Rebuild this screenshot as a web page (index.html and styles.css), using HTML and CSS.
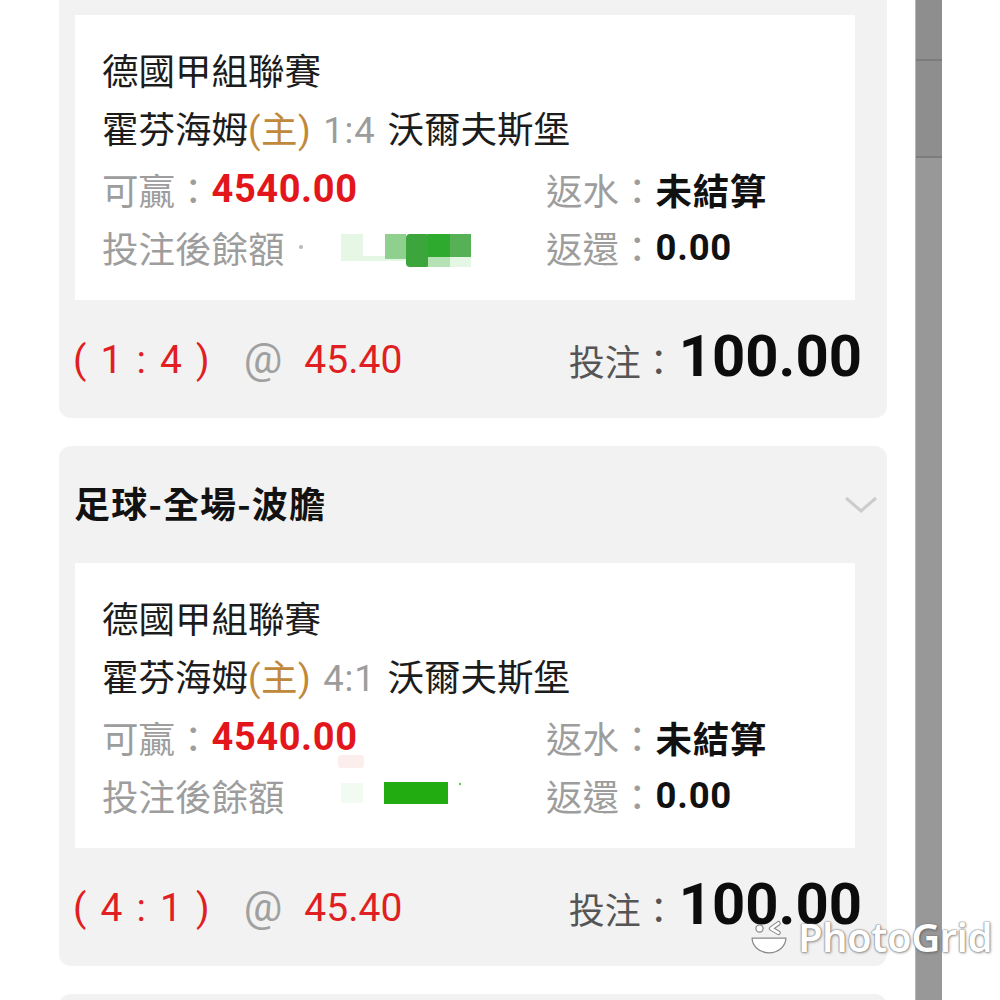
FILE: index.html
```html
<!DOCTYPE html>
<html lang="zh-Hant">
<head>
<meta charset="utf-8">
<title>注單</title>
<link rel="stylesheet" href="styles.css">
</head>
<body>
<div class="screen">
  <main class="list">
    <section class="card">
      <header class="card-head">
        <h2>足球-全場-波膽</h2>
        <svg class="chev" width="34" height="18" viewBox="0 0 34 18"><path d="M2 2 L17 15 L32 2" fill="none" stroke="#cccccc" stroke-width="3"/></svg>
      </header>
      <div class="detail">
        <p class="line">德國甲組聯賽</p>
        <p class="line">霍芬海姆<span class="home">(主)</span> <span class="score">1:4</span> 沃爾夫斯堡</p>
        <div class="stats">
          <div class="stat"><span class="label">可贏：</span><span class="win">4540.00</span></div>
          <div class="stat"><span class="label">返水：</span><span class="val">未結算</span></div>
          <div class="stat"><span class="label">投注後餘額</span><svg class="mask" width="190" height="40" viewBox="0 0 190 40">
            <circle cx="18" cy="18" r="2" fill="#b8b8b8"/>
            <rect x="58" y="5" width="22" height="27" fill="#e6f7e6"/>
            <rect x="80" y="27" width="45" height="5" fill="#e4f6e4"/>
            <rect x="102" y="5" width="21" height="25" fill="#8fd08f"/>
            <rect x="123" y="5" width="24" height="33" rx="4" fill="#3ca63c"/>
            <rect x="145" y="5" width="22" height="23" fill="#2eab2e"/>
            <rect x="167" y="5" width="21" height="23" fill="#56b156"/>
            <rect x="145" y="28" width="22" height="10" fill="#b5e2b5"/>
            <rect x="167" y="28" width="21" height="10" fill="#e4f6e4"/>
          </svg></div>
          <div class="stat"><span class="label">返還：</span><span class="val">0.00</span></div>
        </div>
      </div>
      <footer class="card-foot">
        <div class="pick"><span class="red odds-pair">( 1 : 4 )</span><span class="at">@</span><span class="red">45.40</span></div>
        <div class="stake"><span class="stake-label">投注：</span><span class="amount">100.00</span></div>
      </footer>
    </section>

    <section class="card">
      <header class="card-head">
        <h2>足球-全場-波膽</h2>
        <svg class="chev" width="34" height="18" viewBox="0 0 34 18"><path d="M2 2 L17 15 L32 2" fill="none" stroke="#cccccc" stroke-width="3"/></svg>
      </header>
      <div class="detail">
        <p class="line">德國甲組聯賽</p>
        <p class="line">霍芬海姆<span class="home">(主)</span> <span class="score">4:1</span> 沃爾夫斯堡</p>
        <div class="stats">
          <div class="stat"><span class="label">可贏：</span><span class="win">4540.00</span></div>
          <div class="stat"><span class="label">返水：</span><span class="val">未結算</span></div>
          <div class="stat"><span class="label">投注後餘額</span><svg class="mask" width="190" height="40" viewBox="0 0 190 40">
            <rect x="55" y="-22" width="26" height="13" rx="3" fill="#fdeeee"/>
            <rect x="58" y="6" width="22" height="20" fill="#f2fbf2"/>
            <rect x="101" y="5" width="64" height="22" fill="#22ac12"/>
            <circle cx="177" cy="7" r="1.2" fill="#6cc46c"/>
          </svg></div>
          <div class="stat"><span class="label">返還：</span><span class="val">0.00</span></div>
        </div>
      </div>
      <footer class="card-foot">
        <div class="pick"><span class="red odds-pair">( 4 : 1 )</span><span class="at">@</span><span class="red">45.40</span></div>
        <div class="stake"><span class="stake-label">投注：</span><span class="amount">100.00</span></div>
      </footer>
    </section>

    <section class="card"></section>
  </main>
  <div class="scrollbar"><i class="seg seg-a"></i><i class="seg seg-b"></i><i class="seg seg-c"></i></div>
</div>

<div class="watermark">
  <svg class="wm-icon" width="38" height="38" viewBox="0 0 36 36">
    <g fill="#ffffff" stroke="#8a8a8a" stroke-width="1.2">
      <path d="M2 19 H34 A16 14 0 0 1 2 19 Z"/>
      <circle cx="9" cy="10" r="3.4"/>
    </g>
    <path d="M27 5 L20 10 L27 14" fill="none" stroke="#8a8a8a" stroke-width="4.4" stroke-linecap="round" stroke-linejoin="round"/>
    <path d="M27 5 L20 10 L27 14" fill="none" stroke="#ffffff" stroke-width="2.4" stroke-linecap="round" stroke-linejoin="round"/>
  </svg>
  <span class="wm-text">PhotoGrid</span>
</div>
</body>
</html>
```

FILE: styles.css
```css
html, body {
  margin: 0;
  padding: 0;
  background: #ffffff;
  height: 1000px;
  overflow: hidden;
  font-family: Roboto, "Noto Sans CJK TC", sans-serif;
}

.screen {
  display: flex;
  gap: 28px;
  height: 1000px;
  overflow: hidden;
}

.list {
  flex: none;
  width: 828px;
  padding-left: 59px;
  margin-top: -102px;
  display: flex;
  flex-direction: column;
  gap: 28px;
}

.card {
  flex: none;
  background: #f2f2f2;
  border-radius: 12px;
  height: 520px;
  display: flex;
  flex-direction: column;
}

.card-head {
  height: 117px;
  box-sizing: border-box;
  padding: 0 9px 6px 15px;
  display: flex;
  align-items: center;
  justify-content: space-between;
}

.card-head h2 {
  margin: 0;
  font-size: 36px;
  font-weight: 700;
  color: #121212;
  letter-spacing: 1.2px;
  font-family: "Noto Sans CJK TC", sans-serif;
}

.chev {
  margin-top: 6px;
}

.detail {
  margin: 0 32px 0 16px;
  background: #ffffff;
  padding: 29px 27px 24px;
  height: 285px;
  box-sizing: border-box;
}

.line {
  margin: 0;
  font-size: 36.5px;
  line-height: 58px;
  color: #1c1c1c;
  white-space: nowrap;
  word-spacing: 3px;
}

.home {
  color: #c0883b;
  letter-spacing: 0.5px;
}

.score {
  color: #9c9c9c;
  letter-spacing: 0.8px;
}

.stats {
  display: grid;
  grid-template-columns: 444px 1fr;
  grid-auto-rows: 58px;
}

.stat {
  display: flex;
  align-items: center;
  white-space: nowrap;
  font-size: 36.5px;
}

.label {
  color: #9d9d9d;
}

.win {
  color: #e2161b;
  font-weight: 700;
  font-size: 38px;
  letter-spacing: 0.6px;
}

.val {
  color: #111111;
  font-weight: 700;
  letter-spacing: 0.8px;
}

.mask {
  display: block;
  overflow: visible;
  margin-left: -2px;
  margin-top: 4px;
}

.card-foot {
  flex: 1;
  display: flex;
  align-items: center;
  justify-content: space-between;
  padding: 0 25px 6px 14px;
}

.pick {
  display: flex;
  align-items: baseline;
  font-size: 39px;
  padding-top: 4px;
}

.red {
  color: #e01f23;
}

.odds-pair {
  white-space: pre;
  letter-spacing: 2.2px;
}

.at {
  color: #a0a0a0;
  font-size: 43px;
  margin: 0 22px 0 32px;
}

.stake {
  display: flex;
  align-items: baseline;
  white-space: nowrap;
}

.stake-label {
  font-size: 36px;
  color: #555555;
}

.amount {
  font-size: 58px;
  font-weight: 700;
  color: #0c0c0c;
  margin-left: 2px;
}

.scrollbar {
  flex: none;
  width: 27px;
  display: flex;
  flex-direction: column;
  border-left: 1px solid #b5b5b5;
  box-sizing: border-box;
}

.seg {
  display: block;
  background: #8e8e8e;
}

.seg-a {
  height: 59px;
  border-bottom: 2px solid #7c7c7c;
}

.seg-b {
  height: 95px;
  border-bottom: 2px solid #7c7c7c;
}

.seg-c {
  flex: 1;
  background: #989898;
}

.watermark {
  position: absolute;
  left: 750px;
  top: 909px;
  display: flex;
  align-items: center;
  gap: 10px;
}

.wm-text {
  font-family: "Noto Sans", sans-serif;
  font-size: 40px;
  font-weight: 600;
  color: #ffffff;
  letter-spacing: -0.5px;
  text-shadow: 0 0 1px #707070, 0 0 2px #808080, 1px 1px 3px rgba(0, 0, 0, 0.35);
}
```
